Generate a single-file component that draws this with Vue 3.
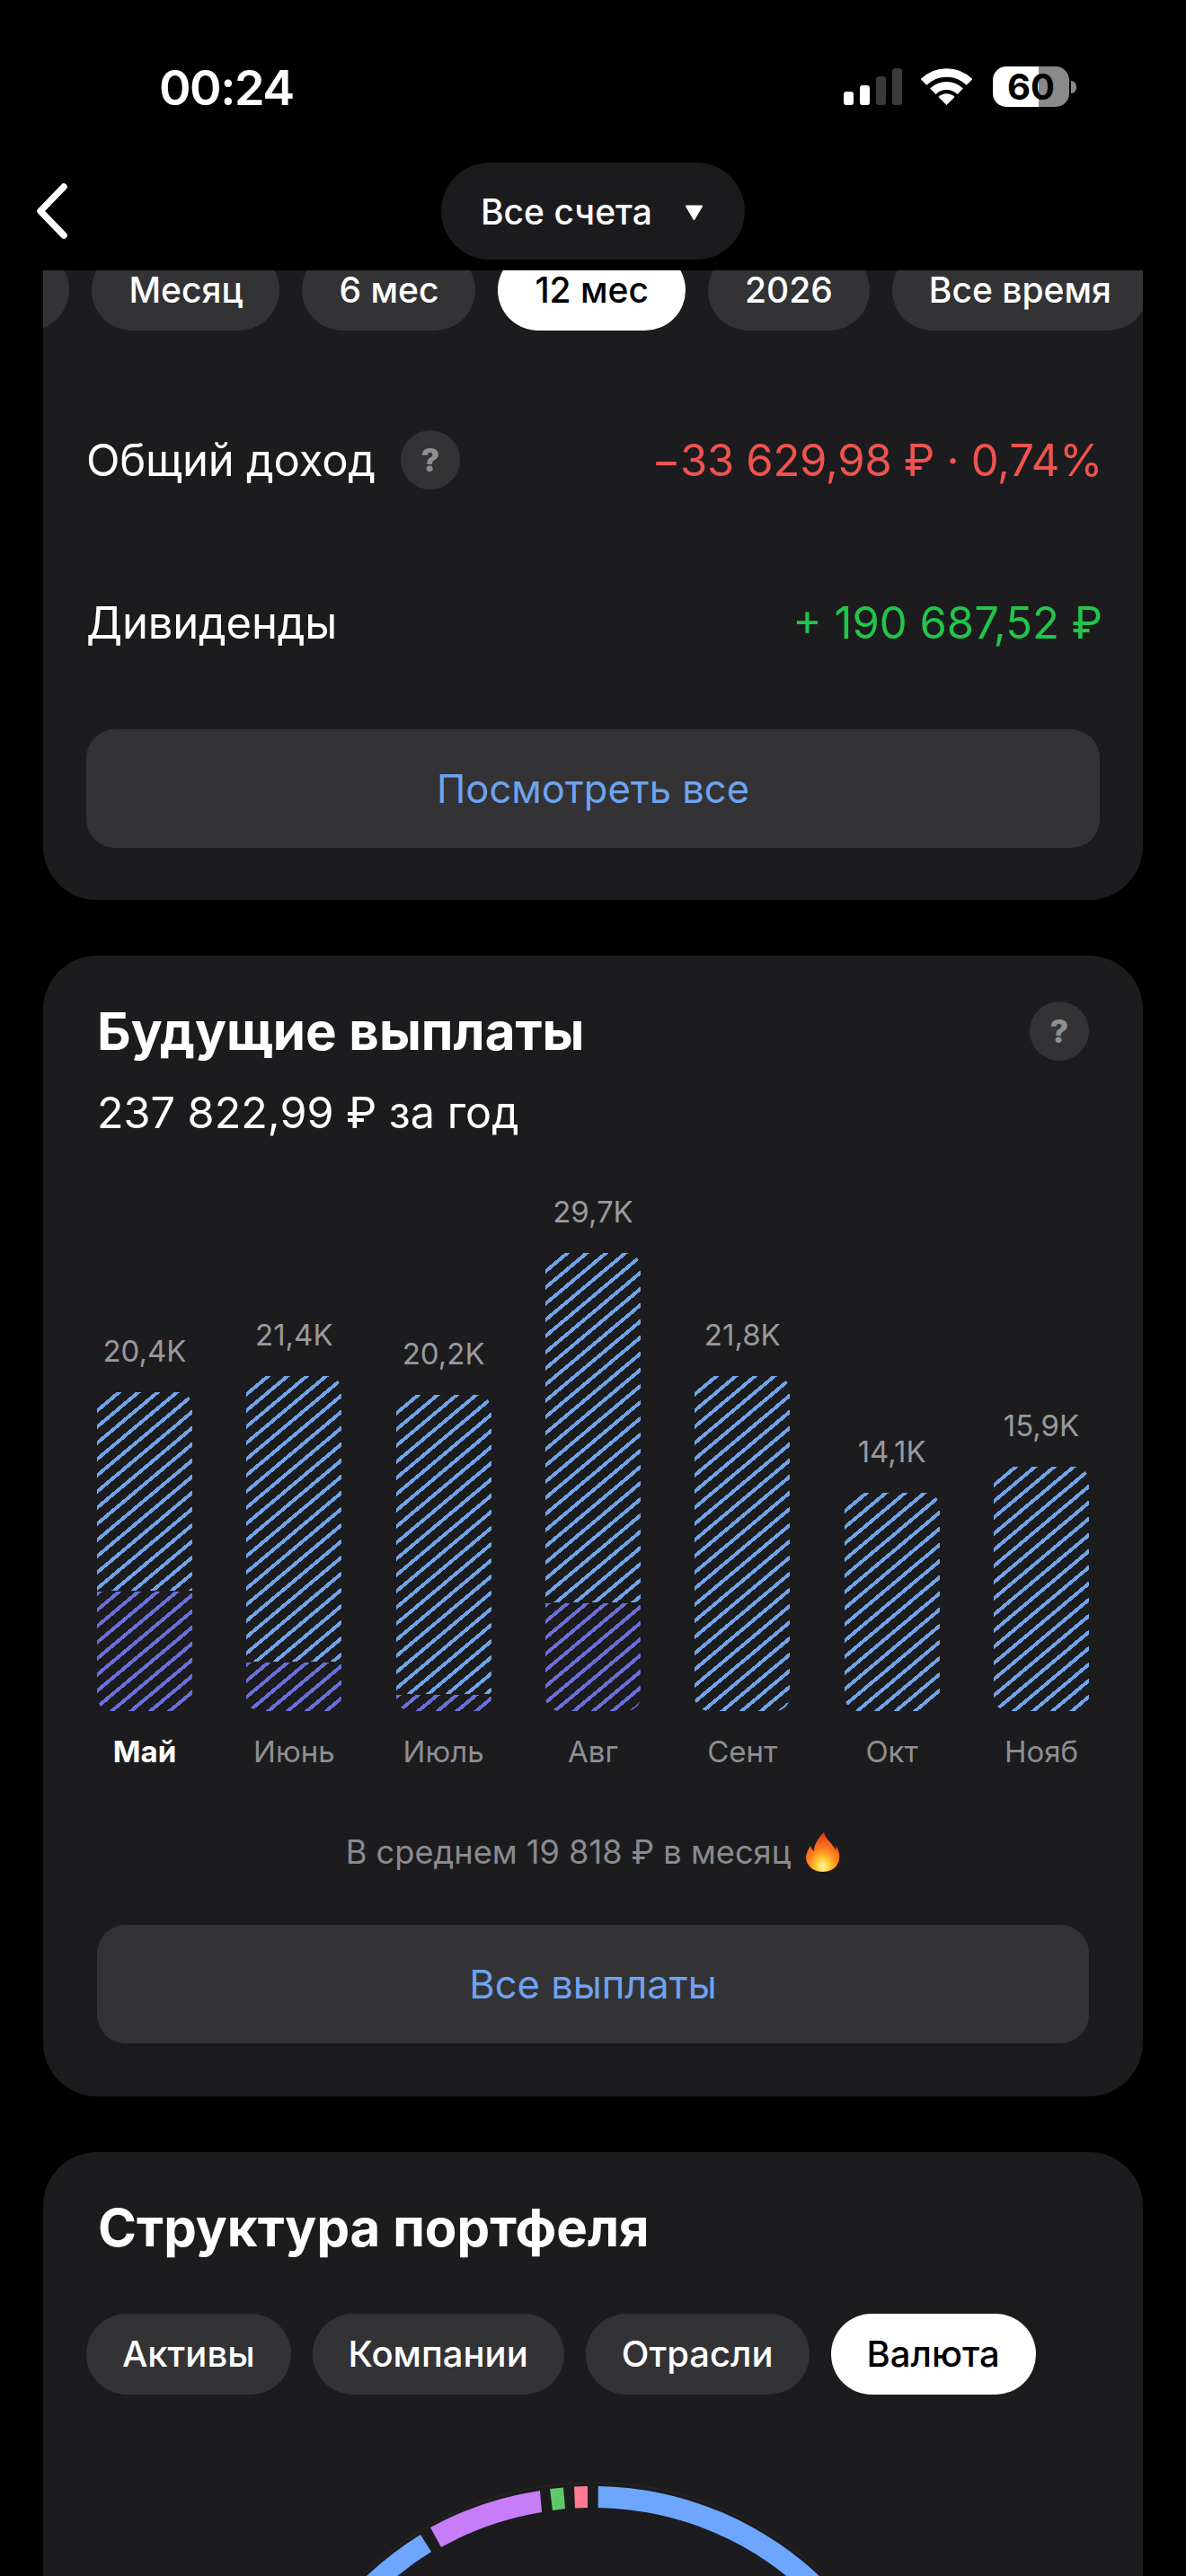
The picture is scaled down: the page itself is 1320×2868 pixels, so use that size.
<template>
  <div class="screen">
    <header class="top">
      <div class="status">
        <span class="time">00:24</span>
        <div class="status-icons">
          <div class="signal">
            <i v-for="s in signal" :key="s.h" :class="{ off: s.off }" :style="{ height: s.h + 'px' }"></i>
          </div>
          <svg class="wifi" width="57" height="41" viewBox="0 0 57 41" fill="none">
            <path d="M3 15.5A36 36 0 0 1 54 15.5" stroke="#fff" stroke-width="9.5" />
            <path d="M13.3 25.8A21.5 21.5 0 0 1 43.7 25.8" stroke="#fff" stroke-width="9" />
            <path d="M28.5 41L19.5 32A12.7 12.7 0 0 1 37.5 32Z" fill="#fff" />
          </svg>
          <div class="battery">
            <div class="battery-body"><span>60</span></div>
            <div class="battery-tip"></div>
          </div>
        </div>
      </div>
      <div class="nav">
        <svg class="back" width="36" height="62" viewBox="0 0 36 62" fill="none">
          <path d="M31 4L5 31L31 58" stroke="#fff" stroke-width="7.5" stroke-linecap="round" stroke-linejoin="round" />
        </svg>
        <div class="account">
          <span>Все счета</span>
          <svg width="21" height="17" viewBox="0 0 21 17"><path d="M2 1.5H19L10.5 16Z" fill="#fff" stroke="#fff" stroke-width="2" stroke-linejoin="round" /></svg>
        </div>
      </div>
    </header>

    <div class="scroll">
      <section class="card income">
        <div class="chips periods">
          <span class="chip stub"></span>
          <span v-for="p in periods" :key="p" class="chip" :class="{ on: p === '12 мес' }">{{ p }}</span>
        </div>
        <div class="row first">
          <div class="row-label">Общий доход <span class="help">?</span></div>
          <div class="loss">−33 629,98 ₽ · 0,74%</div>
        </div>
        <div class="row second">
          <div class="row-label">Дивиденды</div>
          <div class="gain">+ 190 687,52 ₽</div>
        </div>
        <div class="btn income-btn">Посмотреть все</div>
      </section>

      <section class="card future">
        <div class="head">
          <h2>Будущие выплаты</h2>
          <span class="help">?</span>
        </div>
        <div class="sub">237 822,99 ₽ за год</div>
        <div class="bars">
          <div v-for="b in bars" :key="b.month" class="col">
            <div class="val">{{ b.val }}</div>
            <div class="bar">
              <div class="part blue" :style="{ height: b.h - (b.low ? b.low + 1 : 0) + 'px' }"></div>
              <div v-if="b.low" class="part violet" :style="{ height: b.low + 'px' }"></div>
            </div>
            <div class="month" :class="{ now: b.now }">{{ b.month }}</div>
          </div>
        </div>
        <div class="avg">
          В среднем 19 818 ₽ в месяц
          <svg width="38" height="44" viewBox="0 0 38 44">
            <defs>
              <radialGradient id="flame" cx="0.5" cy="0.86" r="0.8">
                <stop offset="0" stop-color="#fff6b0" />
                <stop offset="0.22" stop-color="#ffd23c" />
                <stop offset="0.5" stop-color="#ff8a1f" />
                <stop offset="1" stop-color="#e8391c" />
              </radialGradient>
            </defs>
            <path d="M20 0C22 8 30 12 33 20C34 18 34 16 33 14C37 20 38 26 37 31C35 39 28 44 19 44C9 44 1 38 0 29C0 23 3 19 5 15C6 18 7 20 9 21C9 13 14 6 20 0Z" fill="url(#flame)" />
          </svg>
        </div>
        <div class="btn">Все выплаты</div>
      </section>

      <section class="card structure">
        <h2>Структура портфеля</h2>
        <div class="chips tabs">
          <span v-for="t in tabs" :key="t" class="chip" :class="{ on: t === 'Валюта' }">{{ t }}</span>
        </div>
        <svg class="donut" width="750" height="750" viewBox="-8 -8 750 750">
          <circle cx="367" cy="367" r="371" fill="none" stroke="#fff" stroke-opacity="0.05" />
          <path d="M372.7 0A367 367 0 0 1 734 367L710 367A343 343 0 0 0 372.7 24Z" fill="#6ea6ff" />
          <path d="M346 0.6A367 367 0 0 1 361 0L361 24A343 343 0 0 0 347 24.4Z" fill="#ff7a90" />
          <path d="M319 3A367 367 0 0 1 334 1.4L336 25A343 343 0 0 0 322 27Z" fill="#5fc86a" />
          <path d="M186 46A367 367 0 0 1 308 5L310 29A343 343 0 0 0 198 68Z" fill="#c77cf8" />
          <path d="M0 367A367 367 0 0 1 175 54L187 73A343 343 0 0 0 24 367Z" fill="#6ea6ff" />
        </svg>
      </section>
    </div>
  </div>
</template>

<script setup>
const signal = [
  { h: 15 },
  { h: 22 },
  { h: 32, off: true },
  { h: 41, off: true },
]

const periods = ['Месяц', '6 мес', '12 мес', '2026', 'Все время']
const tabs = ['Активы', 'Компании', 'Отрасли', 'Валюта']

// h и low в пикселях, снято со столбиков
const bars = [
  { month: 'Май', val: '20,4K', h: 355, low: 133, now: true },
  { month: 'Июнь', val: '21,4K', h: 373, low: 54 },
  { month: 'Июль', val: '20,2K', h: 352, low: 18 },
  { month: 'Авг', val: '29,7K', h: 510, low: 120 },
  { month: 'Сент', val: '21,8K', h: 373 },
  { month: 'Окт', val: '14,1K', h: 243 },
  { month: 'Нояб', val: '15,9K', h: 272 },
]
</script>

<style>
html, body { margin: 0; background: #000; overflow: hidden; }
</style>

<style scoped>
.screen {
  width: 1320px;
  height: 2868px;
  background: #000;
  color: #fff;
  font-family: Inter, "Noto Sans", sans-serif;
  overflow: hidden;
}

.top { height: 301px; }
.status {
  height: 181px;
  box-sizing: border-box;
  padding: 66px 122px 0 177px;
  display: flex;
  justify-content: space-between;
  align-items: flex-start;
}
.time { font-size: 54px; line-height: 64px; font-weight: 600; letter-spacing: -1.5px; }
.status-icons { display: flex; align-items: flex-start; padding-top: 8px; }
.signal { display: flex; align-items: flex-end; gap: 7px; height: 41px; margin-top: 2px; }
.signal i { width: 11px; border-radius: 3px; background: #fff; }
.signal i.off { background: #3a3a3a; }
.wifi { margin-left: 21px; margin-top: 2px; }
.battery { display: flex; align-items: center; margin-left: 23px; }
.battery-body {
  width: 85px;
  height: 45px;
  border-radius: 15px;
  background: linear-gradient(90deg, #fff 60%, #8a8a8a 60%);
  color: #000;
  font-size: 40px;
  font-weight: 700;
  line-height: 45px;
  text-align: center;
}
.battery-tip { width: 6px; height: 14px; margin-left: 2px; border-radius: 0 7px 7px 0; background: #8a8a8a; }

.nav { position: relative; height: 108px; display: flex; justify-content: center; }
.back { position: absolute; left: 40px; top: 23px; }
.account {
  width: 338px;
  height: 108px;
  box-sizing: border-box;
  padding-left: 44px;
  border-radius: 54px;
  background: #1b1b1d;
  display: flex;
  align-items: center;
  gap: 36px;
  font-size: 39px;
  font-weight: 500;
}
.account svg { margin-top: 2px; }

.scroll { height: 2567px; overflow: hidden; }
.card {
  margin: 0 48px 62px;
  border-radius: 60px;
  background: #1c1c1e;
}
.income { margin-top: -60px; padding: 37px 48px 58px; border-radius: 0 0 60px 60px; }
.future { padding: 51px 60px 59px; }
.structure { padding: 50px 48px 0; }

.chips { display: flex; gap: 24px; }
.chip {
  flex: none;
  height: 90px;
  box-sizing: border-box;
  padding: 0 40px;
  border-radius: 45px;
  background: #333335;
  font-size: 40px;
  line-height: 90px;
  font-weight: 500;
  white-space: nowrap;
}
.chip.on { background: #fff; color: #000; }
.chip.stub { width: 200px; }
.periods { margin: 0 -48px; gap: 25px; justify-content: flex-end; overflow: hidden; }
.periods .chip { font-size: 39px; padding: 0 41px; }
.periods .chip:last-child { margin-right: -6px; }

.row { display: flex; justify-content: space-between; align-items: center; height: 66px; font-size: 49px; }
.row.first { margin-top: 111px; }
.row.second { margin-top: 115px; }
.row-label { display: flex; align-items: center; gap: 28px; letter-spacing: -0.2px; }
.help {
  flex: none;
  width: 66px;
  height: 66px;
  border-radius: 50%;
  background: #333335;
  color: #8e8e93;
  font-size: 36px;
  font-weight: 800;
  line-height: 66px;
  text-align: center;
}
.loss { color: #ef5350; letter-spacing: -0.3px; margin-right: -3px; }
.gain { color: #22c54b; margin-right: -3px; }

.btn {
  height: 132px;
  border-radius: 32px;
  background: #333335;
  color: #6ea3f0;
  font-size: 43.5px;
  line-height: 132px;
  text-align: center;
}
.income-btn { margin-top: 86px; }

.head { display: flex; justify-content: space-between; align-items: center; height: 66px; }
h2 { margin: 0; font-size: 58.2px; line-height: 66px; font-weight: 700; }
.sub { margin-top: 28px; font-size: 48.5px; line-height: 60px; }

.bars { margin-top: 60px; display: flex; justify-content: space-between; align-items: flex-end; }
.col { width: 106px; display: flex; flex-direction: column; align-items: center; }
.val { font-size: 33px; line-height: 40px; margin-bottom: 26px; color: #99999c; white-space: nowrap; }
.bar { width: 106px; display: flex; flex-direction: column; gap: 1px; border-radius: 16px; overflow: hidden; }
.part { flex: none; }
.blue { background: repeating-linear-gradient(140deg, #6fa3ea 0 4px, transparent 4px 13.8px); }
.violet { background: repeating-linear-gradient(140deg, #6a6fd8 0 4px, transparent 4px 13.8px); }
.month { margin-top: 25px; font-size: 33px; line-height: 40px; color: #8e8e93; }
.month.now { color: #fff; font-weight: 700; }

.avg {
  margin-top: 70px;
  height: 44px;
  display: flex;
  justify-content: center;
  align-items: center;
  gap: 17px;
  font-size: 36.2px;
  line-height: 44px;
  color: #8a8a90;
}
.avg + .btn { margin-top: 59px; }

.structure h2 { padding-left: 13px; line-height: 68px; }
.tabs { margin-top: 62px; }
.donut { display: block; margin: 94px 0 0 189px; }
</style>
